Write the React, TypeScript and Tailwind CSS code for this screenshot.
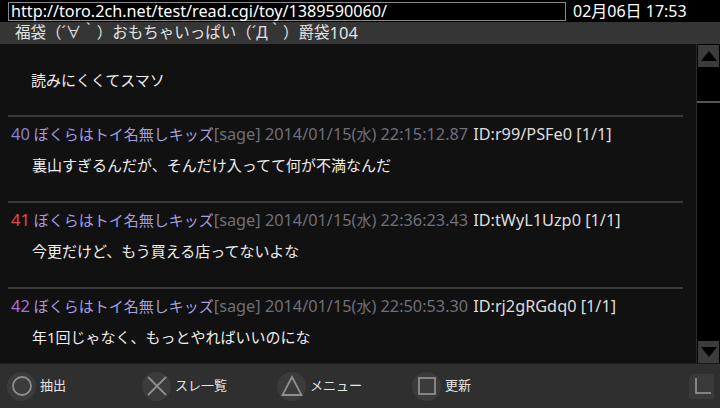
import React from 'react';

type Post = {
  no: number;
  noColor: string;
  time: string;
  id: string;
  body: string;
};

const posts: Post[] = [
  { no: 40, noColor: 'text-[#8882d0]', time: '22:15:12.87', id: 'ID:r99/PSFe0', body: '裏山すぎるんだが、そんだけ入ってて何が不満なんだ' },
  { no: 41, noColor: 'text-[#e24a4a]', time: '22:36:23.43', id: 'ID:tWyL1Uzp0', body: '今更だけど、もう買える店ってないよな' },
  { no: 42, noColor: 'text-[#a672d8]', time: '22:50:53.30', id: 'ID:rj2gRGdq0', body: '年1回じゃなく、もっとやればいいのにな' },
];

const PadButton: React.FC<{ shape: 'circle' | 'cross' | 'triangle' | 'square'; label: string }> = ({ shape, label }) => (
  <div className="flex items-center gap-[4px]">
    <div className="w-[29px] h-[29px] rounded-full bg-[#3b3b3b] flex items-center justify-center">
      <svg width="22" height="22" viewBox="0 0 22 22" fill="none" stroke="#8e8e8e" strokeWidth="1.8">
        {shape === 'circle' && <circle cx="11" cy="11" r="9" />}
        {shape === 'cross' && <path d="M2 2 L20 20 M20 2 L2 20" />}
        {shape === 'triangle' && <path d="M11 2 L20.5 20 L1.5 20 Z" strokeLinejoin="miter" />}
        {shape === 'square' && <rect x="3" y="3" width="16" height="16" />}
      </svg>
    </div>
    <span className="text-[13px] text-[#e6e6e6]">{label}</span>
  </div>
);

export default function App() {
  return (
    <div className="w-[720px] h-[408px] bg-black flex flex-col overflow-hidden font-['Noto_Sans','Noto_Sans_CJK_JP',sans-serif]">
      {/* status bar */}
      <div className="h-[22px] flex items-center pl-[8px] pr-[8px]">
        <div className="w-[558px] h-[19px] border border-[#8a8a8a] flex items-center pl-[2px] text-[16.2px] leading-[17px] text-white whitespace-nowrap">
          http://toro.2ch.net/test/read.cgi/toy/1389590060/
        </div>
        <span className="ml-[7px] text-[16px] leading-[17px] text-white whitespace-nowrap">02月06日 17:53</span>
      </div>

      {/* thread title */}
      <div className="h-[22px] bg-[#353535] flex items-center pl-[15px] text-[15.5px] text-[#e2e2e2] whitespace-nowrap">
        福袋（´∀｀）おもちゃいっぱい（´Д｀）爵袋<span className="text-[16.5px]">104</span>
      </div>

      {/* content + scrollbar */}
      <div className="flex-1 flex min-h-0">
        <div className="w-[697px] bg-[#111111] border-r border-[#2a2a2a] pr-[13px]">
          <div className="h-[73px] pt-[26px] pl-[23px] border-b-2 border-[#3a3a3a] ml-[8px]">
            <div className="h-[20px] leading-[20px] text-[15px] text-[#eeeeee] whitespace-nowrap">読みにくくてスマソ</div>
          </div>
          {posts.map((p) => (
            <div key={p.no} className="h-[86px] pt-[7px] border-b-2 border-[#3a3a3a] ml-[8px]">
              <div className="h-[20px] leading-[20px] text-[15px] pl-[3px] whitespace-nowrap flex gap-[5px]">
                <span>
                  <span className={`${p.noColor} text-[16.5px]`}>{p.no}</span>{' '}
                  <span className="text-[#a59fe0]">ぼくらはトイ名無しキッズ</span>
                  <span className="text-[#6f6f7a]">
                    <span className="text-[16.3px]">[sage] 2014/01/15(</span>水<span className="text-[16.3px]">) {p.time}</span>
                  </span>
                </span>
                <span className="text-[#dedede] text-[16.3px]">{p.id} [1/1]</span>
              </div>
              <div className="mt-[11px] h-[20px] leading-[20px] text-[15px] pl-[24px] text-[#eeeeee] whitespace-nowrap">{p.body}</div>
            </div>
          ))}
        </div>
        <div className="flex-1 bg-black flex flex-col">
          <div className="h-[22px] mt-[1px] mx-[1px] bg-[#3c3c3c] flex items-center justify-center">
            <svg width="16" height="10" viewBox="0 0 16 10"><path d="M8 0 L16 10 L0 10 Z" fill="#000" /></svg>
          </div>
          <div className="h-[34px]" />
          <div className="h-[2px] bg-[#555]" />
          <div className="flex-1" />
          <div className="h-[22px] mx-[1px] bg-[#3c3c3c] flex items-center justify-center">
            <svg width="16" height="10" viewBox="0 0 16 10"><path d="M0 0 L16 0 L8 10 Z" fill="#000" /></svg>
          </div>
        </div>
      </div>

      {/* bottom bar */}
      <div className="h-[45px] bg-[#2f2f2f] border-t border-[#1c1c1c] flex items-center pl-[7px] pr-[6px]">
        <div className="w-[135px]"><PadButton shape="circle" label="抽出" /></div>
        <div className="w-[135px]"><PadButton shape="cross" label="スレ一覧" /></div>
        <div className="w-[135px]"><PadButton shape="triangle" label="メニュー" /></div>
        <div className="flex-1"><PadButton shape="square" label="更新" /></div>
        <div className="w-[25px] h-[25px] bg-[#3a3a3a] rounded-tl-[6px] rounded-[2px] flex items-center justify-center">
          <svg width="20" height="20" viewBox="0 0 20 20" fill="none" stroke="#9a9a9a" strokeWidth="1.6">
            <path d="M4 2 V17 H19" />
          </svg>
        </div>
      </div>
    </div>
  );
}
